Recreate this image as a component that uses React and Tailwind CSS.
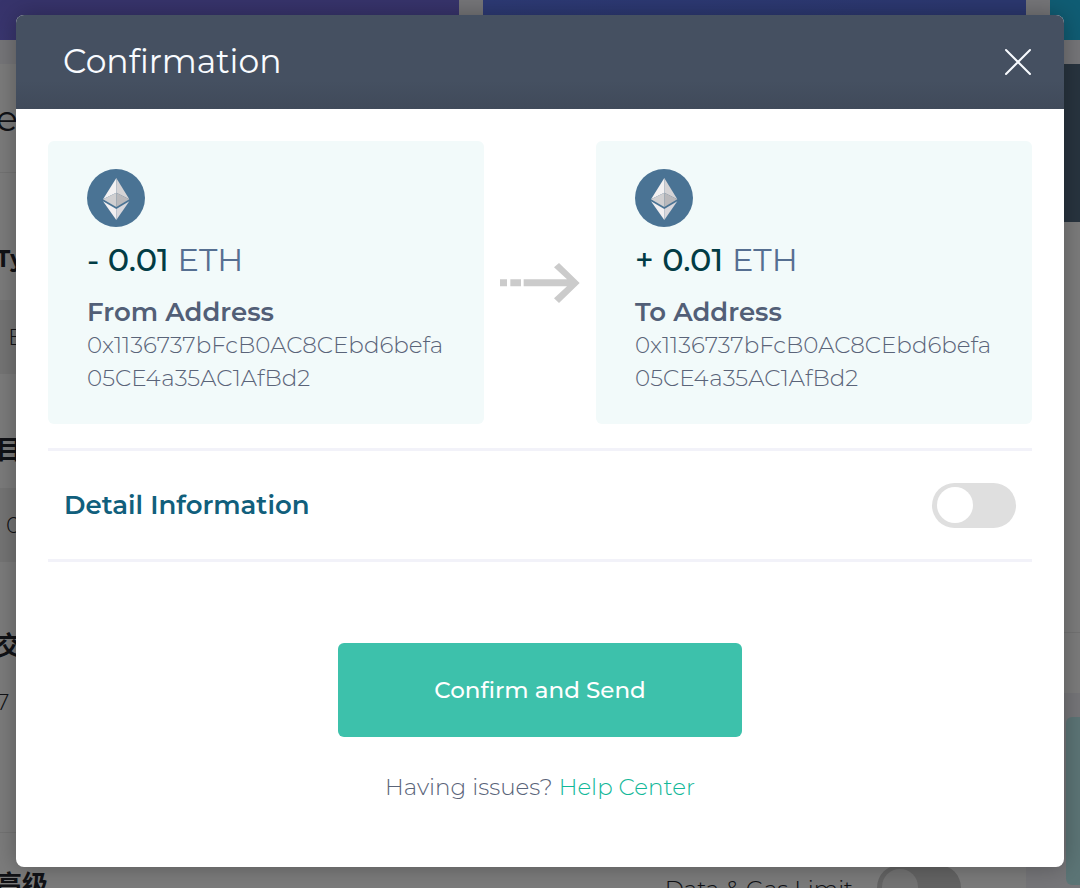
import { useState } from "react";

const ADDRESS = ["0x1136737bFcB0AC8CEbd6befa", "05CE4a35AC1AfBd2"];

function EthIcon() {
  return (
    <svg className="size-[58px]" viewBox="0 0 58 58" aria-hidden="true">
      <circle cx="29" cy="29" r="29" fill="#4a7394" />
      <path d="M29.3 9L16 30.3l13.3-6.6z" fill="#f3f1f2" />
      <path d="M29.3 9l13 21.3-13-6.6z" fill="#d5d3d5" />
      <path d="M16 30.3l13.3-6.6V38z" fill="#d0cfd1" />
      <path d="M42.3 30.3l-13-6.6V38z" fill="#b9b8bb" />
      <path d="M16 32.3L29.3 40v11z" fill="#f1eff1" />
      <path d="M42.3 32.3l-13 7.7v11z" fill="#d8d7dc" />
    </svg>
  );
}

function TransferArrow() {
  return (
    <svg
      className="w-20 h-10 shrink-0"
      viewBox="0 0 240 120"
      fill="#cbcbcb"
      aria-hidden="true"
    >
      <path d="M0 49h21v21H0zM31 49h32v21H31zM71 49h130l-39-36L177 0l62 60-62 60-15-14 39-36H71z" />
    </svg>
  );
}

function AddressCard({ amount, label }) {
  return (
    <div className="flex-1 min-w-0 rounded-md bg-[#f2fafa] px-[39px] pt-7 pb-[29px]">
      <EthIcon />
      <div className="mt-3 text-[32px] leading-[42px] font-medium text-[#023c45]">
        {amount} <span className="font-normal text-[#566f91]">ETH</span>
      </div>
      <div className="mt-3.5 text-[26px] leading-[34px] font-semibold text-[#525f77]">
        {label}
      </div>
      <div className="text-[23px] leading-[33px] font-light text-[#5a6479]">
        {ADDRESS.map((line) => (
          <div key={line}>{line}</div>
        ))}
      </div>
    </div>
  );
}

function PageBehind() {
  return (
    <div className="absolute inset-0 flex flex-col gap-6 bg-[#ececf2] text-[#22252c]">
      <div className="flex gap-6 h-10 shrink-0">
        <div className="w-[459px] bg-gradient-to-t from-[#746de0] to-[#6f68d8]"></div>
        <div className="flex-1 bg-gradient-to-r from-[#5a74ea] to-[#5970e0]"></div>
        <div className="w-[30px] bg-[#20bbe8]"></div>
      </div>
      <div className="flex gap-6 flex-1 min-h-0 -ml-1">
        <div className="flex-1 min-w-0 bg-[#f8f8f8] overflow-hidden">
          <div className="h-[109px] pt-8 text-[36px] leading-[44px] border-b border-[#e6e6e6]">
            e
          </div>
          <div className="h-[127px] pt-16 text-[23px] leading-[44px] font-bold">
            Ty
          </div>
          <div className="h-[74px] pl-3 bg-[#ebebeb] text-[23px] leading-[74px] font-light">
            E
          </div>
          <div className="h-[114px] pt-14 text-[26px] leading-[40px] font-bold">
            目
          </div>
          <div className="h-[74px] pl-2.5 bg-[#ebebeb] text-[23px] leading-[74px] font-light">
            0
          </div>
          <div className="h-[271px] pt-16 border-b border-[#e6e6e6]">
            <div className="text-[26px] leading-[40px] font-bold">交</div>
            <div className="mt-4 text-[23px] leading-[40px] font-light">7</div>
          </div>
          <div className="flex items-start justify-between pt-8 pr-[65px]">
            <div className="pt-0.5 text-[26px] leading-[36px] font-bold">高级</div>
            <div className="flex items-start gap-6">
              <div className="pt-1.5 text-[23px] leading-[36px] font-light">
                Data &amp; Gas Limit
              </div>
              <div className="w-[84px] h-[45px] rounded-full bg-[#c8c8c8] p-1 pl-[5px]">
                <div className="size-9 rounded-full bg-[#e8e8e8]"></div>
              </div>
            </div>
          </div>
        </div>
        <div className="w-[30px]">
          <div className="h-[158px] bg-[#51687f]"></div>
          <div className="h-[411px] bg-[#f8f8f8] border-b border-[#e6e6e6]"></div>
          <div className="h-[60px] bg-[#f8f8f8]"></div>
          <div className="h-[168px] mt-6 ml-4 rounded-l-md bg-[#b9eaec]"></div>
        </div>
      </div>
    </div>
  );
}

function App() {
  const [showDetail, setShowDetail] = useState(false);

  return (
    <div className="relative min-h-screen overflow-hidden font-['Montserrat','Inter','Noto_Sans_CJK_SC',sans-serif]">
      <PageBehind />
      <div className="relative min-h-screen bg-black/50 px-4 pt-[15px] pb-5">
        <div
          role="dialog"
          aria-labelledby="dialog-title"
          className="rounded-lg overflow-hidden bg-white shadow-[0_0_24px_rgba(0,0,0,0.3)]"
        >
          <div className="flex items-center justify-between h-[94px] pl-[47px] pr-8 bg-gradient-to-b from-[#455061] from-70% to-[#404a5a]">
            <h1
              id="dialog-title"
              className="pb-0.5 text-[33px] leading-[44px] text-[#f8fbff]"
            >
              Confirmation
            </h1>
            <button type="button" aria-label="Close" className="cursor-pointer">
              <svg
                className="size-7"
                viewBox="0 0 28 28"
                stroke="#f8fbff"
                strokeWidth="2"
                strokeLinecap="round"
              >
                <path d="M2 2l24 24M26 2L2 26" />
              </svg>
            </button>
          </div>

          <div className="px-8 pt-8 pb-[62px]">
            <div className="flex items-center gap-4">
              <AddressCard amount="- 0.01" label="From Address" />
              <TransferArrow />
              <AddressCard amount="+ 0.01" label="To Address" />
            </div>

            <div className="flex items-center justify-between h-[114px] mt-6 px-4 border-y-3 border-[#f2f2f9]">
              <label
                htmlFor="detail"
                className="text-[26px] leading-[36px] font-semibold text-[#115f7c]"
              >
                Detail Information
              </label>
              <input
                id="detail"
                type="checkbox"
                checked={showDetail}
                onChange={(e) => setShowDetail(e.target.checked)}
                className="appearance-none cursor-pointer w-[84px] h-[45px] rounded-full bg-[#dfdfdf] p-1 pl-[5px] before:block before:size-9 before:rounded-full before:bg-white checked:bg-[#3dc1ab] checked:before:ml-[38px]"
              />
            </div>

            <div className="flex flex-col items-center pt-[81px]">
              <button
                type="button"
                className="w-[404px] max-w-full h-[94px] rounded-md bg-[#3dc1ab] text-[23px] font-medium text-white cursor-pointer"
              >
                Confirm and Send
              </button>
              <p className="mt-8 text-[23px] leading-[36px] font-light text-[#5a6479]">
                Having issues?{" "}
                <a href="#help" className="text-[#12b899]">
                  Help Center
                </a>
              </p>
            </div>
          </div>
        </div>
      </div>
    </div>
  );
}

export default App;
